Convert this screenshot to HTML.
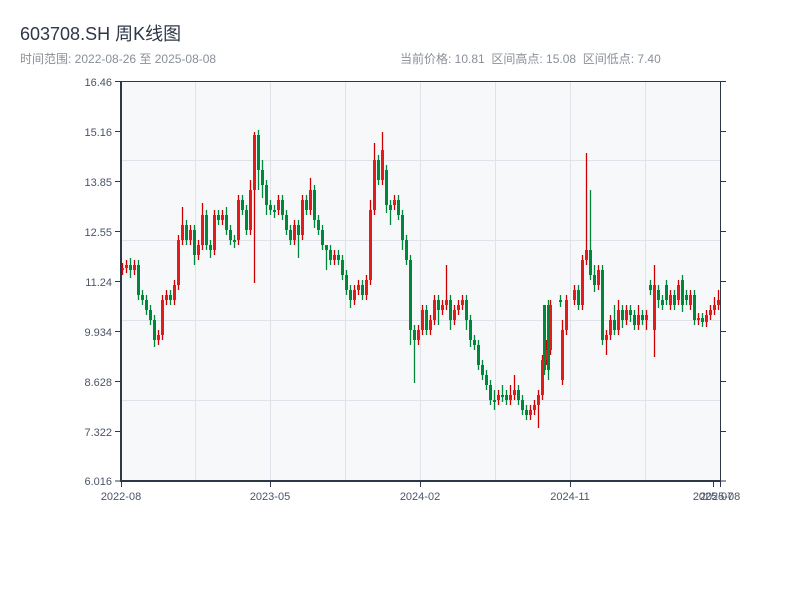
<!DOCTYPE html>
<html><head><meta charset="utf-8"><style>
body{margin:0;background:#fff;width:800px;height:600px;overflow:hidden;font-family:"Liberation Sans","Noto Sans CJK SC",sans-serif;}
svg text{font-family:"Liberation Sans","Noto Sans CJK SC",sans-serif;}
</style></head><body>
<svg width="800" height="600" xmlns="http://www.w3.org/2000/svg">
<text x="20" y="40" font-size="18" fill="#2d3748">603708.SH 周K线图</text>
<text x="20" y="63" font-size="12" fill="#8a8f98">时间范围: 2022-08-26 至 2025-08-08</text>
<text x="400" y="63" font-size="12" fill="#8a8f98" xml:space="preserve">当前价格: 10.81  区间高点: 15.08  区间低点: 7.40</text>
<rect x="121" y="81" width="599" height="400" fill="#f7f8fa"/>
<g stroke="#dfe2e8" stroke-width="1">
<line x1="121" y1="160.5" x2="720" y2="160.5"/><line x1="121" y1="240.5" x2="720" y2="240.5"/>
<line x1="121" y1="320.5" x2="720" y2="320.5"/><line x1="121" y1="400.5" x2="720" y2="400.5"/>
<line x1="195.5" y1="81" x2="195.5" y2="481"/><line x1="270.5" y1="81" x2="270.5" y2="481"/>
<line x1="345.5" y1="81" x2="345.5" y2="481"/><line x1="420.5" y1="81" x2="420.5" y2="481"/>
<line x1="495.5" y1="81" x2="495.5" y2="481"/><line x1="570.5" y1="81" x2="570.5" y2="481"/>
<line x1="645.5" y1="81" x2="645.5" y2="481"/>
</g>
<path fill="none" stroke="#cc0000" stroke-width="1.3" d="M122.5 263V275M126.5 260V273M134.5 260V275M158.5 330V345M162.5 295V340M166.5 290V305M174.5 280V305M178.5 235V290M182.5 207V245M190.5 225V245M198.5 240V260M202.5 203V250M214.5 210V255M222.5 210V225M238.5 195V245M250.5 180V235M254.5 132V283M278.5 195V215M294.5 220V245M302.5 195V240M310.5 178V215M334.5 250V265M354.5 285V305M358.5 280V295M366.5 275V300M370.5 200V285M374.5 143V215M382.5 132V185M394.5 195V210M418.5 325V345M422.5 305V335M430.5 315V335M434.5 295V325M442.5 300V315M446.5 265V310M454.5 305V325M458.5 300V315M462.5 295V310M498.5 390V405M510.5 385V405M514.5 375V400M530.5 405V420M534.5 400V415M538.5 390V428M542.5 355V400M546.5 340V365M550.5 300V355M562.5 320V385M566.5 295V335M574.5 285V305M582.5 255V310M586.5 153V265M598.5 265V290M606.5 330V355M610.5 315V340M618.5 300V335M626.5 305V325M638.5 305V330M646.5 310V330M654.5 265V357M670.5 290V310M678.5 280V305M690.5 290V310M698.5 313V325M706.5 310V327M710.5 305V320M714.5 297V315M718.5 290V310"/>
<path fill="none" stroke="#e21b1b" stroke-width="3" d="M122.5 268V270M126.5 265V268M134.5 265V270M158.5 335V340M162.5 300V335M166.5 295V300M174.5 285V300M178.5 240V285M182.5 225V240M190.5 230V240M198.5 245V255M202.5 215V245M214.5 215V250M222.5 215V220M238.5 200V240M250.5 190V230M254.5 135V190M278.5 200V210M294.5 225V240M302.5 200V235M310.5 190V210M334.5 255V260M354.5 290V300M358.5 285V290M366.5 280V295M370.5 210V280M374.5 160V210M382.5 150V180M394.5 200V205M418.5 330V340M422.5 310V330M430.5 320V330M434.5 300V320M442.5 305V310M446.5 300V305M454.5 310V320M458.5 305V310M462.5 300V305M498.5 395V400M510.5 395V400M514.5 390V395M530.5 410V415M534.5 405V410M538.5 395V405M542.5 360V395M546.5 350V360M550.5 305V350M562.5 330V380M566.5 300V330M574.5 290V300M582.5 260V305M586.5 250V260M598.5 270V285M606.5 335V340M610.5 320V335M618.5 310V330M626.5 310V320M638.5 315V325M646.5 315V320M654.5 285V330M670.5 295V305M678.5 285V300M690.5 295V305M698.5 318V320M706.5 315V322M710.5 310V315M714.5 305V310M718.5 300V305"/>
<path fill="none" stroke="#00873c" stroke-width="1.3" d="M130.5 258V278M138.5 260V300M142.5 290V305M146.5 295V315M150.5 305V325M154.5 315V347M170.5 290V305M186.5 220V245M194.5 225V265M206.5 210V250M210.5 240V258M218.5 210V225M226.5 207V235M230.5 225V245M234.5 235V248M242.5 195V215M246.5 205V235M258.5 130V190M262.5 160V198M266.5 180V215M270.5 200V215M274.5 205V218M282.5 195V220M286.5 210V235M290.5 225V245M298.5 220V258M306.5 195V215M314.5 185V228M318.5 215V235M322.5 225V250M326.5 245V270M330.5 245V265M338.5 250V265M342.5 255V280M346.5 270V295M350.5 285V308M362.5 280V300M378.5 155V185M386.5 165V213M390.5 200V225M398.5 195V220M402.5 210V250M406.5 235V265M410.5 255V345M414.5 325V383M426.5 305V335M438.5 295V325M450.5 295V330M466.5 295V330M470.5 315V347M474.5 335V350M478.5 340V370M482.5 360V380M486.5 370V390M490.5 380V405M494.5 390V410M502.5 385V402M506.5 390V405M518.5 385V405M522.5 395V415M526.5 405V420M544.5 315V375M548.5 300V380M560.5 295V307M578.5 285V310M590.5 190V280M594.5 265V292M602.5 265V345M614.5 305V335M622.5 305V328M630.5 305V322M634.5 310V330M642.5 310V325M650.5 280V295M658.5 285V308M662.5 295V310M666.5 280V305M674.5 290V310M682.5 275V312M686.5 290V305M694.5 290V325M702.5 313V327"/>
<path fill="none" stroke="#00873c" stroke-width="3" d="M130.5 265V270M138.5 265V295M142.5 295V300M146.5 300V310M150.5 310V320M154.5 320V340M170.5 295V300M186.5 225V240M194.5 230V255M206.5 215V245M210.5 245V250M218.5 215V220M226.5 215V230M230.5 230V240M234.5 240V242M242.5 200V210M246.5 210V230M258.5 135V170M262.5 170V185M266.5 185V205M270.5 205V210M274.5 210V212M282.5 200V215M286.5 215V230M290.5 230V240M298.5 225V235M306.5 200V210M314.5 190V220M318.5 220V230M322.5 230V245M326.5 245V250M330.5 250V260M338.5 255V260M342.5 260V275M346.5 275V290M350.5 290V300M362.5 285V295M378.5 160V180M386.5 170V205M390.5 205V210M398.5 200V215M402.5 215V240M406.5 240V260M410.5 260V330M414.5 330V340M426.5 310V330M438.5 300V310M450.5 300V320M466.5 300V320M470.5 320V340M474.5 340V345M478.5 345V365M482.5 365V375M486.5 375V385M490.5 385V400M494.5 400V402M502.5 395V397M506.5 395V400M518.5 390V400M522.5 400V410M526.5 410V415M544.5 305V370M548.5 305V370M560.5 300V302M578.5 290V305M590.5 250V275M594.5 275V285M602.5 270V340M614.5 320V330M622.5 310V320M630.5 310V315M634.5 315V325M642.5 315V320M650.5 285V290M658.5 290V300M662.5 300V305M666.5 285V300M674.5 295V305M682.5 280V305M686.5 295V300M694.5 295V320M702.5 318V322"/>
<g stroke="#2d3748">
<line x1="121" y1="81.5" x2="720" y2="81.5" stroke-width="1"/>
<line x1="720.5" y1="81" x2="720.5" y2="481" stroke-width="1"/>
<line x1="121" y1="81" x2="121" y2="482" stroke-width="2"/>
<line x1="120" y1="481" x2="721" y2="481" stroke-width="2"/>
</g>
<path fill="none" stroke="#2d3748" stroke-width="1" d="M115 81.5H121M115 131.5H121M115 181.5H121M115 231.5H121M115 281.5H121M115 331.5H121M115 381.5H121M115 431.5H121M115 481H121M720 81.5H726M720 131.5H726M720 181.5H726M720 231.5H726M720 281.5H726M720 331.5H726M720 381.5H726M720 431.5H726M720 481H726M121.5 481V487M270.5 481V487M420.5 481V487M570.5 481V487M713.5 481V487M720.5 481V487"/>
<g font-size="11" fill="#4a5568" text-anchor="end">
<text x="112" y="86">16.46</text><text x="112" y="136">15.16</text><text x="112" y="186">13.85</text>
<text x="112" y="236">12.55</text><text x="112" y="286">11.24</text><text x="112" y="336">9.934</text>
<text x="112" y="386">8.628</text><text x="112" y="436">7.322</text><text x="112" y="485">6.016</text>
</g>
<g font-size="11" fill="#4a5568" text-anchor="middle">
<text x="121" y="500">2022-08</text><text x="270" y="500">2023-05</text><text x="420" y="500">2024-02</text>
<text x="570" y="500">2024-11</text><text x="713" y="500">2025-07</text><text x="720" y="500">2025-08</text>
</g>
</svg>
</body></html>
